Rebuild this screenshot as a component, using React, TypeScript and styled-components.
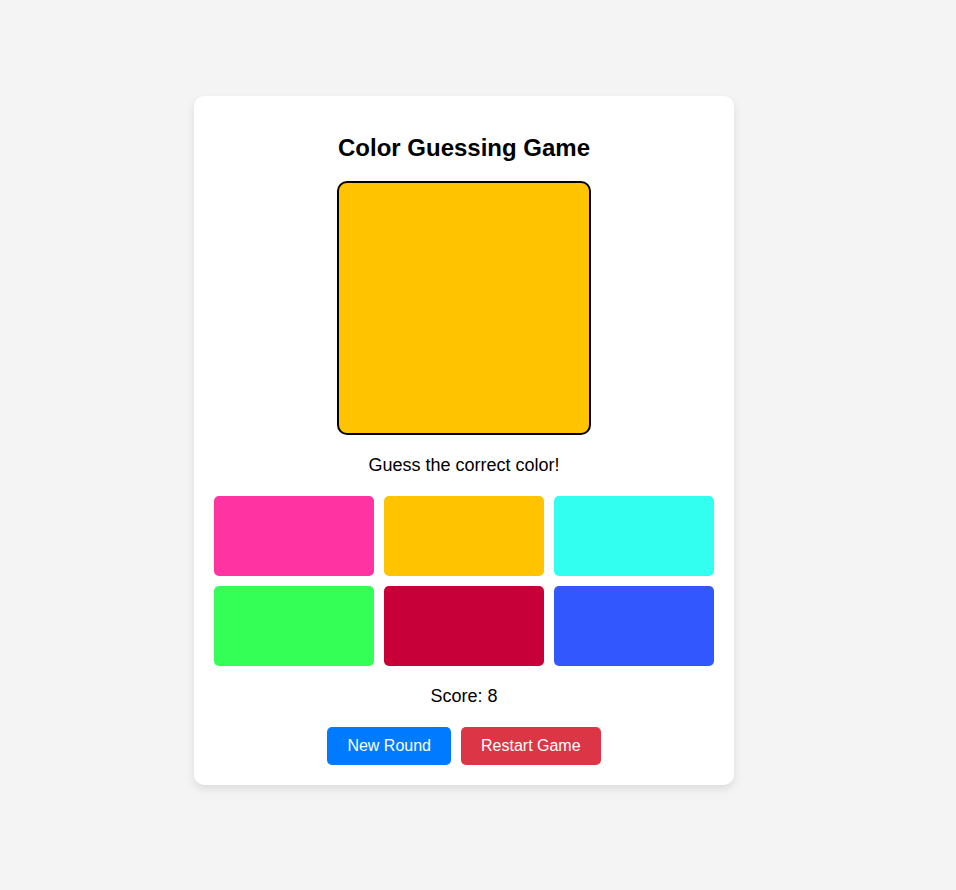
import React, { useState } from 'react';
import styled, { createGlobalStyle } from 'styled-components';

const GlobalStyle = createGlobalStyle`
  html, body {
    margin: 0;
    padding: 0;
    background-color: #f4f4f4;
    font-family: "Liberation Sans", Arial, sans-serif;
  }
`;

const Page = styled.div`
  min-height: 100vh;
  box-sizing: border-box;
  display: flex;
  justify-content: center;
  align-items: center;
  padding: 0 28px 9px 0;
`;

const Card = styled.div`
  width: 540px;
  box-sizing: border-box;
  padding: 20px;
  background-color: white;
  border-radius: 10px;
  box-shadow: 0 4px 8px rgba(0, 0, 0, 0.1);
  text-align: center;
`;

const Title = styled.h2`
  font-size: 24px;
  font-weight: 700;
  line-height: 27px;
  margin: 18px 0 20px;
  color: #000;
`;

const ColorBox = styled.div<{ $color: string }>`
  width: 250px;
  height: 250px;
  margin: 0 auto;
  border: 2px solid #000;
  border-radius: 10px;
  background-color: ${(p) => p.$color};
`;

const Message = styled.p`
  font-size: 18px;
  line-height: 21px;
  margin: 20px 0;
  color: #000;
`;

const OptionGrid = styled.div`
  display: grid;
  grid-template-columns: repeat(3, 1fr);
  gap: 10px;
`;

const OptionButton = styled.button<{ $color: string }>`
  height: 80px;
  border: none;
  border-radius: 5px;
  cursor: pointer;
  background-color: ${(p) => p.$color};
`;

const Controls = styled.div`
  display: flex;
  justify-content: center;
  gap: 10px;
`;

const ActionButton = styled.button<{ $variant: 'primary' | 'danger' }>`
  padding: 10px 20px;
  font-family: "Liberation Sans", Arial, sans-serif;
  font-size: 16px;
  line-height: 18px;
  color: white;
  border: none;
  border-radius: 5px;
  cursor: pointer;
  background-color: ${(p) => (p.$variant === 'primary' ? '#007bff' : '#dc3545')};
`;

const colors = ['#ff33a1', '#ffc300', '#33fff0', '#33ff57', '#c70039', '#3357ff'];

export default function App() {
  const [target] = useState('#ffc300');
  const [score] = useState(8);

  return (
    <Page>
      <GlobalStyle />
      <Card>
        <Title>Color Guessing Game</Title>
        <ColorBox $color={target} />
        <Message>Guess the correct color!</Message>
        <OptionGrid>
          {colors.map((c) => (
            <OptionButton key={c} $color={c} />
          ))}
        </OptionGrid>
        <Message>Score: {score}</Message>
        <Controls>
          <ActionButton $variant="primary">New Round</ActionButton>
          <ActionButton $variant="danger">Restart Game</ActionButton>
        </Controls>
      </Card>
    </Page>
  );
}
